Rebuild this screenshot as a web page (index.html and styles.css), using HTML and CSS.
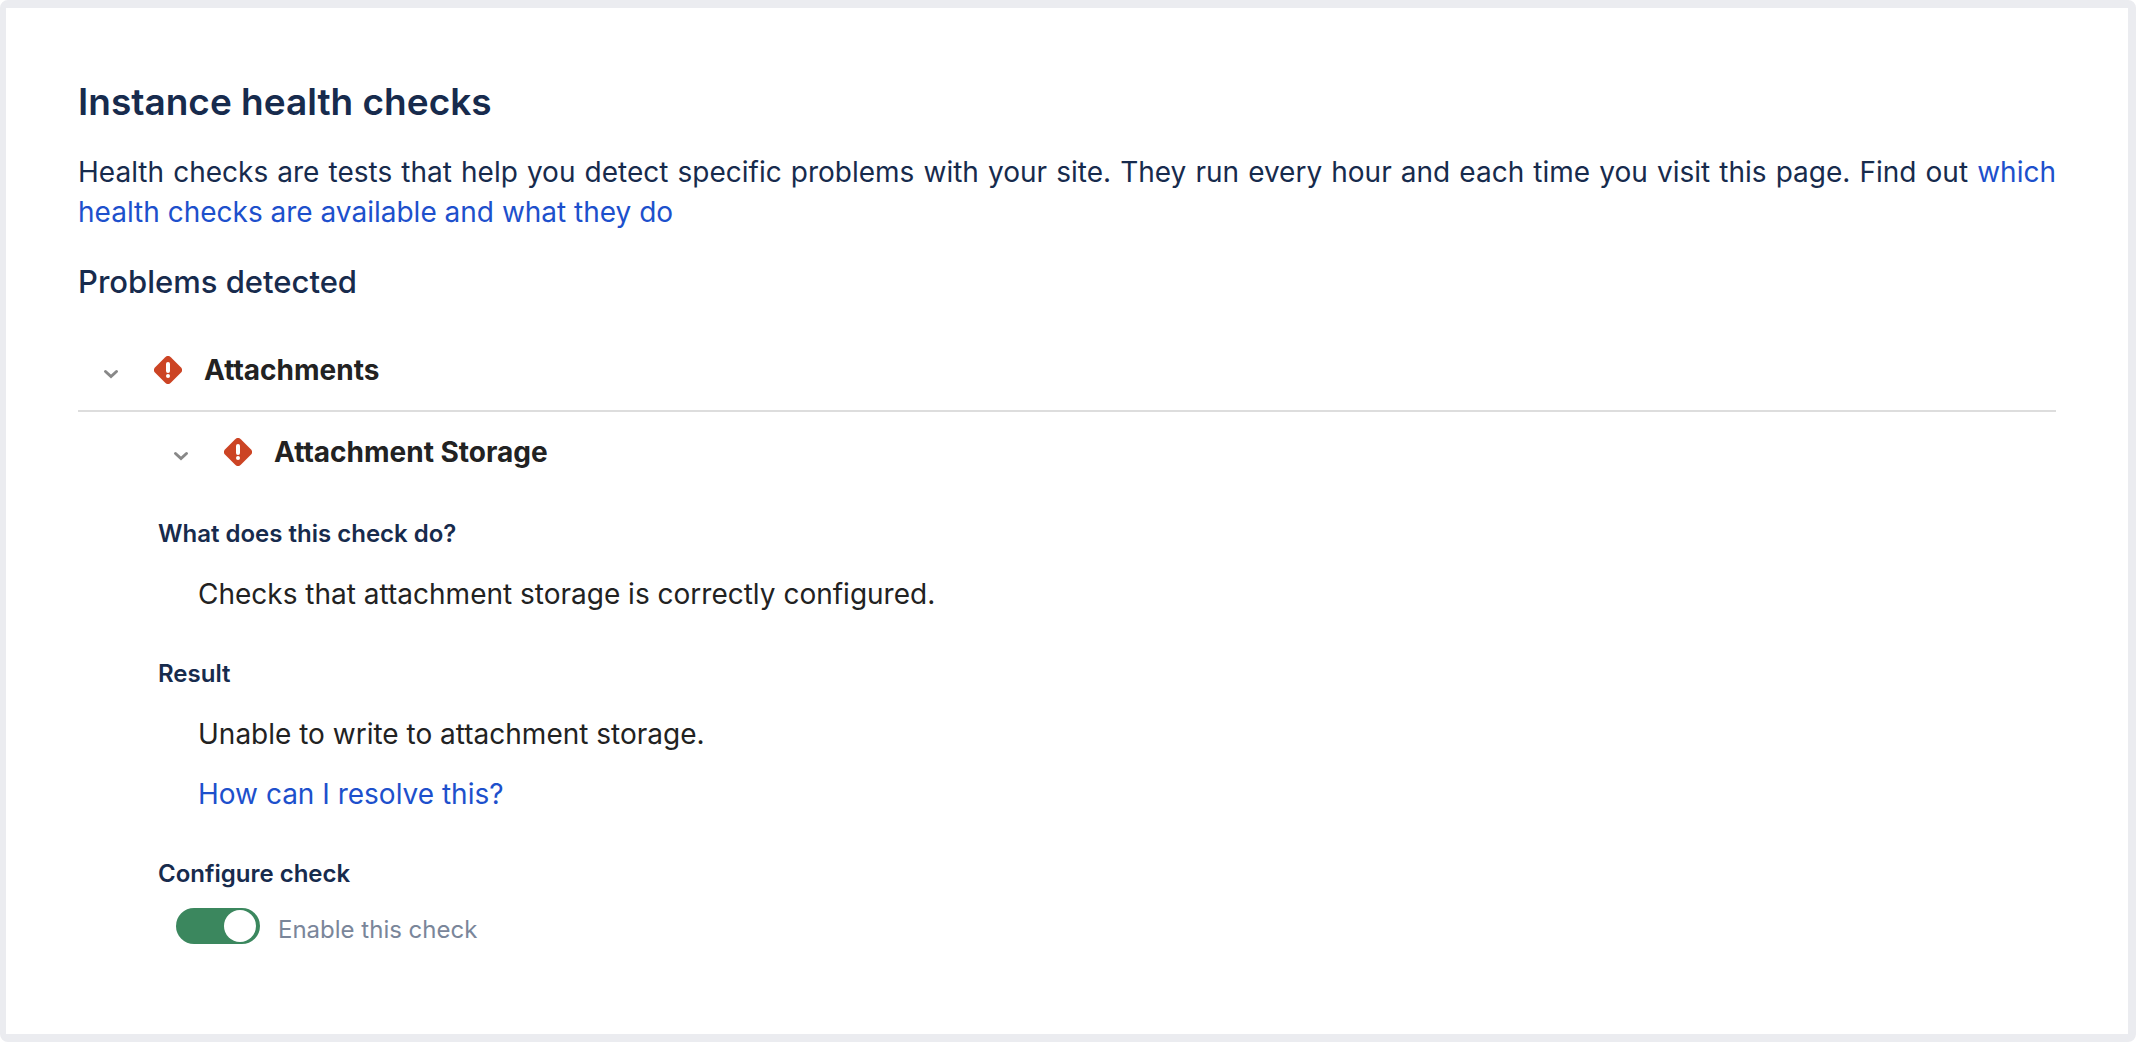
FILE: index.html
```
<!DOCTYPE html>
<html lang="en">
<head>
  <meta charset="UTF-8" />
  <meta name="viewport" content="width=device-width, initial-scale=1" />
  <title>Instance health checks</title>
  <link rel="stylesheet" href="styles.css">
</head>
<body>
  <main class="panel">
    <h1>Instance health checks</h1>
    <p class="intro">Health checks are tests that help you detect specific problems with your site. They run every hour and each time you visit this page. Find out <a href="#">which health checks are available and what they do</a></p>

    <h2>Problems detected</h2>

    <details class="group" open>
      <summary class="group-title">
        <svg class="chevron" viewBox="0 0 26 26" aria-hidden="true"><path d="M7.500 14.500l5.500 5 5.500-5" /></svg>
        <svg class="error-icon" viewBox="0 0 28 28" aria-hidden="true">
          <path class="diamond" d="M11.200 1.200a4 4 0 0 1 5.600 0l10 10a4 4 0 0 1 0 5.600l-10 10a4 4 0 0 1-5.600 0l-10-10a4 4 0 0 1 0-5.600z" />
          <rect class="mark" x="12" y="6" width="4" height="11" rx="2" />
          <circle class="mark" cx="14" cy="20" r="2" />
        </svg>
        Attachments
      </summary>

      <details class="check" open>
        <summary class="check-title">
          <svg class="chevron" viewBox="0 0 26 26" aria-hidden="true"><path d="M7.500 14.500l5.500 5 5.500-5" /></svg>
          <svg class="error-icon" viewBox="0 0 28 28" aria-hidden="true">
            <path class="diamond" d="M11.200 1.200a4 4 0 0 1 5.600 0l10 10a4 4 0 0 1 0 5.600l-10 10a4 4 0 0 1-5.600 0l-10-10a4 4 0 0 1 0-5.600z" />
            <rect class="mark" x="12" y="6" width="4" height="11" rx="2" />
            <circle class="mark" cx="14" cy="20" r="2" />
          </svg>
          Attachment Storage
        </summary>

        <div class="check-body">
          <section>
            <h3>What does this check do?</h3>
            <div class="section-text">
              <p>Checks that attachment storage is correctly configured.</p>
            </div>
          </section>
          <section>
            <h3>Result</h3>
            <div class="section-text">
              <p>Unable to write to attachment storage.</p>
              <p><a href="#">How can I resolve this?</a></p>
            </div>
          </section>
          <section>
            <h3>Configure check</h3>
            <div class="toggle-row">
              <input class="toggle" type="checkbox" role="switch" id="enable-check" checked>
              <label for="enable-check">Enable this check</label>
            </div>
          </section>
        </div>
      </details>
    </details>
  </main>
</body>
</html>
```

FILE: styles.css
```
* {
  box-sizing: border-box;
}

body {
  margin: 0;
  background: #fff;
  color: #222;
  font-family: Inter, "Liberation Sans", sans-serif;
  font-size: 28px;
  line-height: 40px;
}

.panel {
  min-height: 100vh;
  padding: 70px 72px;
  border: 8px solid #ebecf0;
  border-left-width: 6px;
  border-radius: 8px;
}

h1, h2, h3, p {
  margin: 0;
}

h1, h2, h3, .intro {
  color: #172b4d;
}

h1 {
  margin-bottom: 26px;
  font-size: 37px;
  font-weight: 600;
  line-height: 48px;
}

h2 {
  margin: 30px 0 48px;
  font-size: 31px;
  font-weight: 500;
}

h3 {
  font-size: 24px;
  font-weight: 600;
  line-height: 32px;
}

a {
  color: #1d50cc;
  text-decoration: none;
}

a:hover {
  text-decoration: underline;
}

.intro {
  text-align: justify;
}

summary {
  display: flex;
  align-items: center;
  padding-left: 20px;
  font-weight: 700;
  list-style: none;
  cursor: pointer;
}

.group-title {
  padding-bottom: 20px;
  border-bottom: 2px solid #ddd;
}

.check {
  padding: 20px 0 0 70px;
}

.chevron {
  width: 26px;
  height: 26px;
  margin-right: 30px;
  fill: none;
  stroke: #888;
  stroke-width: 3;
  stroke-linecap: round;
}

.error-icon {
  width: 28px;
  height: 28px;
  margin-right: 22px;
}

.diamond {
  fill: #cc4424;
}

.mark {
  fill: #fff;
}

.check-body {
  display: flex;
  flex-direction: column;
  gap: 44px;
  padding: 46px 0 0 10px;
}

.section-text {
  display: flex;
  flex-direction: column;
  gap: 20px;
  padding: 24px 0 0 40px;
}

.toggle-row {
  display: flex;
  align-items: flex-end;
  gap: 18px;
  padding: 18px 0 0 18px;
  color: #7a869a;
  font-size: 24px;
  line-height: 28px;
}

.toggle {
  appearance: none;
  width: 84px;
  height: 36px;
  margin: 0;
  padding: 2px 4px;
  border-radius: 18px;
  background: #b3bac5;
  cursor: pointer;
}

.toggle::before {
  content: "";
  display: block;
  width: 32px;
  height: 32px;
  border-radius: 50%;
  background: #fff;
}

.toggle:checked {
  background: #3b875e;
}

.toggle:checked::before {
  margin-left: auto;
}
```
